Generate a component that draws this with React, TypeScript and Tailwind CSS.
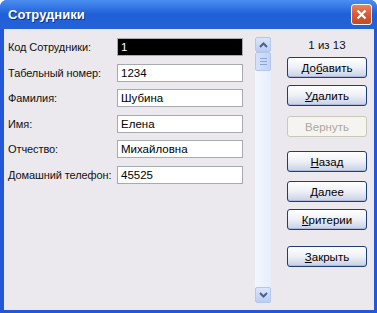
import React from "react";

const fields = [
  { label: "Код Сотрудники:", value: "1", selected: true },
  { label: "Табельный номер:", value: "1234" },
  { label: "Фамилия:", value: "Шубина" },
  { label: "Имя:", value: "Елена" },
  { label: "Отчество:", value: "Михайловна" },
  { label: "Домашний телефон:", value: "45525" },
];

function XpButton({
  pre = "",
  hot = "",
  post = "",
  disabled = false,
  className = "",
}: {
  pre?: string;
  hot?: string;
  post?: string;
  disabled?: boolean;
  className?: string;
}) {
  if (disabled) {
    return (
      <div
        className={
          "flex h-[21px] w-[80px] items-center justify-center rounded-[3px] border border-[#cac8bb] bg-[#f5f4f0] text-[#aca899] " +
          className
        }
      >
        {pre}
        {hot}
        {post}
      </div>
    );
  }
  return (
    <div
      className={
        "flex h-[21px] w-[80px] items-center justify-center rounded-[3px] border border-[#1c3f7a] bg-gradient-to-b from-white via-[#eef0f6] to-[#c6d0e6] text-black shadow-[inset_0_-1px_0_#aebbd8] " +
        className
      }
    >
      <span>
        {pre}
        <span className="underline underline-offset-1">{hot}</span>
        {post}
      </span>
    </div>
  );
}

function Chevron({ up }: { up?: boolean }) {
  return (
    <svg width="9" height="6" viewBox="0 0 9 6">
      <path
        d={up ? "M1 5 L4.5 1.5 L8 5" : "M1 1 L4.5 4.5 L8 1"}
        fill="none"
        stroke="#4d6185"
        strokeWidth="2"
      />
    </svg>
  );
}

export default function App() {
  return (
    <div className="h-[313px] w-[377px] whitespace-nowrap bg-white text-[11.5px] font-['Liberation_Sans',Arial,sans-serif] leading-[14px]">
      <div className="flex h-full flex-col overflow-hidden rounded-t-[7px] bg-[#2157d8]">
        {/* title bar */}
        <div className="flex h-[29px] shrink-0 items-center justify-between bg-gradient-to-b from-[#4b8ef0] via-[#1f5fd8] to-[#2662d6] pl-[8px] pr-[5px]">
          <span className="text-[13px] font-bold text-white [text-shadow:1px_1px_0_#0f2f8a]">
            Сотрудники
          </span>
          <div className="flex h-[21px] w-[21px] items-center justify-center rounded-[3px] border border-white bg-gradient-to-b from-[#e9825d] via-[#d75a30] to-[#c94a22]">
            <svg width="11" height="11" viewBox="0 0 11 11">
              <path d="M1.5 1.5 L9.5 9.5 M9.5 1.5 L1.5 9.5" stroke="white" strokeWidth="2.2" />
            </svg>
          </div>
        </div>

        {/* body */}
        <div className="mb-[3px] ml-[4px] mr-[3px] flex flex-1 bg-[#ebe9ed] pt-[8px]">
          <div className="flex flex-col gap-[7.6px] pl-[4px] pt-[1px]">
            {fields.map((f) => (
              <div key={f.label} className="flex h-[18px] items-center">
                <span className="w-[109px] text-[11px] tracking-[-0.1px] text-[#111]">{f.label}</span>
                <div
                  className={
                    "flex h-[18px] w-[126px] items-center border border-[#a7abb0] pl-[3px] " +
                    (f.selected ? "bg-black text-white" : "bg-white text-black")
                  }
                >
                  {f.value}
                </div>
              </div>
            ))}
          </div>

          {/* scrollbar */}
          <div className="ml-[12px] flex h-[266px] w-[16px] flex-col bg-gradient-to-r from-[#f3f6fd] to-[#e6eefc]">
            <div className="flex h-[15px] items-center justify-center rounded-[2px] border border-[#b3c6ee] bg-gradient-to-b from-[#dbe6fd] to-[#bccdf3]">
              <Chevron up />
            </div>
            <div className="flex h-[19px] flex-col items-center justify-center gap-[2px] rounded-[2px] border border-[#b3c6ee] bg-gradient-to-r from-[#d6e2fc] to-[#c3d3f7]">
              <div className="h-px w-[7px] bg-[#8ba3d6]" />
              <div className="h-px w-[7px] bg-[#8ba3d6]" />
              <div className="h-px w-[7px] bg-[#8ba3d6]" />
            </div>
            <div className="flex-1" />
            <div className="flex h-[16px] items-center justify-center rounded-[2px] border border-[#b3c6ee] bg-gradient-to-b from-[#dbe6fd] to-[#bccdf3]">
              <Chevron />
            </div>
          </div>

          {/* right panel */}
          <div className="ml-[16px] flex w-[80px] flex-col items-center">
            <div className="mt-[1px] h-[14px] text-[#111]">1 из 13</div>
            <XpButton className="mt-[5px]" pre="До" hot="б" post="авить" />
            <XpButton className="mt-[7px]" hot="У" post="далить" />
            <XpButton className="mt-[10px]" pre="Вернуть" disabled />
            <XpButton className="mt-[14px]" hot="Н" post="азад" />
            <XpButton className="mt-[9px]" hot="Д" post="алее" />
            <XpButton className="mt-[7px]" hot="К" post="ритерии" />
            <XpButton className="mt-[16px]" hot="З" post="акрыть" />
          </div>
        </div>
      </div>
    </div>
  );
}
